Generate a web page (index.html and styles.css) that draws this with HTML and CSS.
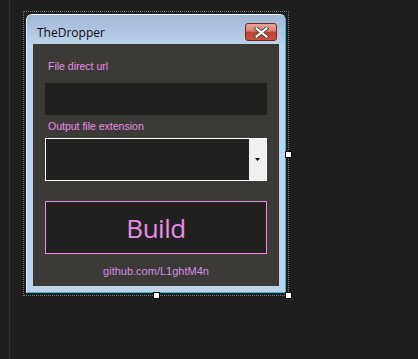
FILE: index.html
```html
<!DOCTYPE html>
<html lang="en">
  <head>
    <meta charset="UTF-8" />
    <meta name="viewport" content="width=device-width, initial-scale=1.0" />
    <title>TheDropper - Designer</title>
    <link rel="stylesheet" href="styles.css">
  </head>
  <body>
    <div class="ide">
      <div class="toolbox"></div>

      <div class="surface">
        <div class="selection">
          <div class="window">
            <div class="titlebar">
              <span class="title">TheDropper</span>
              <button class="close">
                <svg width="15" height="11" viewBox="0 0 15 11">
                  <path d="M2.5 1.5 L12.5 9.5 M12.5 1.5 L2.5 9.5" stroke="#4a4a4a" stroke-width="4" stroke-linecap="square" />
                  <path d="M2.5 1.5 L12.5 9.5 M12.5 1.5 L2.5 9.5" stroke="#ffffff" stroke-width="2" stroke-linecap="square" />
                </svg>
              </button>
            </div>

            <div class="client">
              <div class="field-label">File direct url</div>
              <div class="textbox"></div>

              <div class="field-label">Output file extension</div>
              <div class="combo">
                <div class="combo-field"></div>
                <div class="combo-arrow">
                  <svg width="5" height="3" viewBox="0 0 5 3">
                    <path d="M0 0 H5 L2.5 3 Z" fill="#000" />
                  </svg>
                </div>
              </div>

              <div class="build">Build</div>
              <div class="link">github.com/L1ghtM4n</div>
            </div>
          </div>

          <!-- resize grips of the designer selection -->
          <span class="grip grip-right"></span>
          <span class="grip grip-bottom"></span>
          <span class="grip grip-corner"></span>
        </div>
      </div>
    </div>
  </body>
</html>
```

FILE: styles.css
```css
body {
  margin: 0;
  background-color: #1e1e1e;
  font-family: "Liberation Sans", Arial, sans-serif;
}

.ide {
  display: flex;
  height: 359px;
}

.toolbox {
  width: 9px;
  border-right: 1px solid #2f2f31;
}

.surface {
  padding: 11px 0 0 13px;
}

.selection {
  position: relative;
  border: 1px dotted #7a7a7a;
  padding: 2px;
}

.window {
  width: 260px;
  height: 279px;
  box-sizing: border-box;
  display: flex;
  flex-direction: column;
  border: 1px solid #e6eef8;
  border-right-color: #2fb8dc;
  border-bottom-color: #2fb8dc;
  border-radius: 6px 6px 0 0;
  background-color: #bed4ec;
  padding: 0 6px 6px 6px;
}

.titlebar {
  height: 29px;
  display: flex;
  align-items: flex-start;
  justify-content: space-between;
  background: linear-gradient(#9fb8d5, #bcd2eb);
  margin: 0 -6px;
  padding: 0 8px 0 10px;
  border-radius: 5px 5px 0 0;
}

.title {
  margin-top: 10px;
  font-family: "Open Sans", "Noto Sans", sans-serif;
  font-size: 12px;
  line-height: 16px;
  color: #120812;
}

.close {
  margin-top: 8px;
  width: 32px;
  height: 18px;
  padding: 0;
  border: 1px solid #6a2a30;
  border-radius: 3px;
  background: linear-gradient(#e9a59a 0%, #d98070 45%, #bf3f2c 50%, #c9513c 100%);
  display: flex;
  align-items: center;
  justify-content: center;
}

.client {
  flex: 1;
  background-color: #3c3a36;
  padding: 16px 12px 0 12px;
  display: flex;
  flex-direction: column;
}

.field-label {
  padding-left: 3px;
  font-size: 10.5px;
  line-height: 13px;
  color: #e98ce9;
}

.textbox {
  height: 32px;
  margin: 10px 0 5px;
  background-color: #21201e;
}

.combo {
  height: 43px;
  margin-top: 5px;
  box-sizing: border-box;
  border: 1px solid #ffffff;
  display: flex;
}

.combo-field {
  flex: 1;
  background-color: #21201e;
}

.combo-arrow {
  width: 17px;
  background-color: #f0f0f0;
  display: flex;
  align-items: center;
  justify-content: center;
}

.build {
  height: 53px;
  margin-top: 20px;
  box-sizing: border-box;
  border: 1px solid #e98ce9;
  background-color: #22211f;
  display: flex;
  align-items: center;
  justify-content: center;
  font-family: "Open Sans", "Noto Sans", sans-serif;
  font-size: 26px;
  letter-spacing: -0.5px;
  color: #e98ce9;
}

.link {
  margin-top: 10px;
  text-align: center;
  font-size: 11px;
  line-height: 14px;
  color: #d88ce8;
}

.grip {
  position: absolute;
  width: 5px;
  height: 5px;
  background-color: #ffffff;
  border: 1px solid #000000;
}

.grip-right {
  right: -4px;
  top: 139px;
}

.grip-bottom {
  left: 129px;
  bottom: -4px;
}

.grip-corner {
  right: -4px;
  bottom: -4px;
}
```
